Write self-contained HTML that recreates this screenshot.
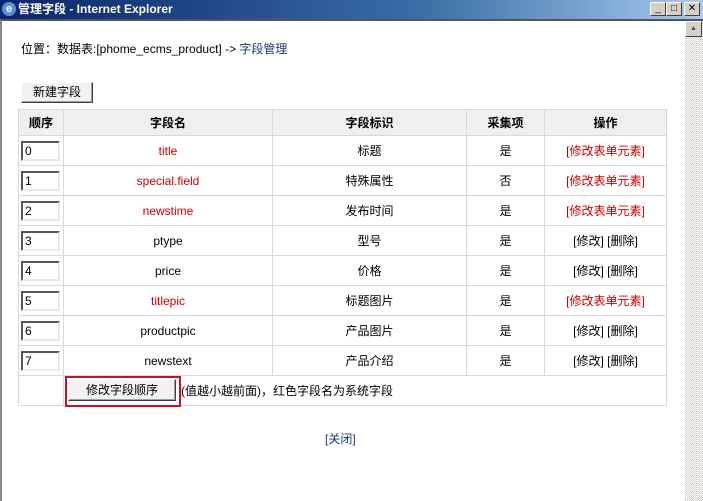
<!DOCTYPE html>
<html><head><meta charset="utf-8"><style>
*{margin:0;padding:0;box-sizing:border-box}
body{width:703px;height:501px;overflow:hidden;background:#fff;font-family:"Liberation Sans","Noto Sans CJK SC",sans-serif;font-size:12px;color:#000;position:relative}
.title{position:absolute;left:0;top:0;width:703px;height:19px;background:linear-gradient(90deg,#0a246a,#3a6ea5 60%,#a6caf0);color:#fff;font-weight:bold;font-size:12px;line-height:19px;padding-left:18px}
.ico{position:absolute;left:2px;top:2px;width:14px;height:14px;background:#5b8fd6;border-radius:50%;color:#fff;font-size:11px;line-height:14px;text-align:center}
.tb{position:absolute;top:2px;width:16px;height:14px;background:#d4d0c8;border:1px solid;border-color:#fff #404040 #404040 #fff;color:#000;font-size:10px;line-height:12px;text-align:center}
.frame{position:absolute;left:0;top:19px;width:703px;height:482px;border-left:2px solid #888;border-top:2px solid #555}
.sb{position:absolute;left:685px;top:21px;width:18px;height:480px;background:repeating-conic-gradient(#d4d0c8 0 25%,#fff 0 50%) 0 0/2px 2px}
.sbb{position:absolute;left:685px;top:21px;width:17px;height:16px;background:#d4d0c8;border:1px solid;border-color:#fff #404040 #404040 #fff;font-size:7px;text-align:center;line-height:14px;color:#555}
.pos{position:absolute;left:21px;top:40px;font-size:12px}
.pos span{color:#1a3a6a}
.btn{position:absolute;background:#f2f2f2;border:1px solid;border-color:#fff #404040 #404040 #fff;box-shadow:inset -1px -1px #a0a0a0;text-align:center;font-size:12px}
table{position:absolute;left:18px;top:109px;border-collapse:collapse;width:649px}
td{border:1px solid #d8d8d8;height:30px;text-align:center;font-size:12px}
tr.h td{height:26px;background:#efefef;font-weight:bold}
.r,.r *{color:#c00}
input{width:39px;height:20px;border:2px solid;border-color:#555 #e8e8e8 #e8e8e8 #555;font-size:12px;padding-left:2px;font-family:inherit;display:block;margin-left:2px;background:#fff}
td.l{text-align:left}
</style></head><body>
<div class="title"><div class="ico">e</div>管理字段 - Internet Explorer</div>
<div class="tb" style="left:650px">_</div><div class="tb" style="left:666px">□</div><div class="tb" style="left:684px">✕</div>
<div class="frame"></div>
<div class="sb"></div><div class="sbb">▲</div>
<div class="pos">位置：数据表:[phome_ecms_product] -&gt; <span>字段管理</span></div>
<div class="btn" style="left:21px;top:82px;width:72px;height:21px;line-height:19px">新建字段</div>
<table>
<tr class="h"><td style="width:45px">顺序</td><td style="width:209px">字段名</td><td style="width:194px">字段标识</td><td style="width:78px">采集项</td><td>操作</td></tr>
<tr><td class="l"><input value="0"></td><td class="r">title</td><td>标题</td><td>是</td><td class="r">[修改表单元素]</td></tr>
<tr><td class="l"><input value="1"></td><td class="r">special.field</td><td>特殊属性</td><td>否</td><td class="r">[修改表单元素]</td></tr>
<tr><td class="l"><input value="2"></td><td class="r">newstime</td><td>发布时间</td><td>是</td><td class="r">[修改表单元素]</td></tr>
<tr><td class="l"><input value="3"></td><td>ptype</td><td>型号</td><td>是</td><td>[修改] [删除]</td></tr>
<tr><td class="l"><input value="4"></td><td>price</td><td>价格</td><td>是</td><td>[修改] [删除]</td></tr>
<tr><td class="l"><input value="5"></td><td class="r">titlepic</td><td>标题图片</td><td>是</td><td class="r">[修改表单元素]</td></tr>
<tr><td class="l"><input value="6"></td><td>productpic</td><td>产品图片</td><td>是</td><td>[修改] [删除]</td></tr>
<tr><td class="l"><input value="7"></td><td>newstext</td><td>产品介绍</td><td>是</td><td>[修改] [删除]</td></tr>
<tr><td></td><td colspan="4" class="l" style="padding-left:117px">(值越小越前面)，红色字段名为系统字段</td></tr>
</table>
<div style="position:absolute;left:65px;top:376px;width:116px;height:31px;border:2px solid #c8102e"></div>
<div class="btn" style="left:68px;top:379px;width:108px;height:22px;line-height:20px">修改字段顺序</div>
<div style="position:absolute;left:325px;top:430px;color:#1a3a6a">[关闭]</div>
</body></html>
